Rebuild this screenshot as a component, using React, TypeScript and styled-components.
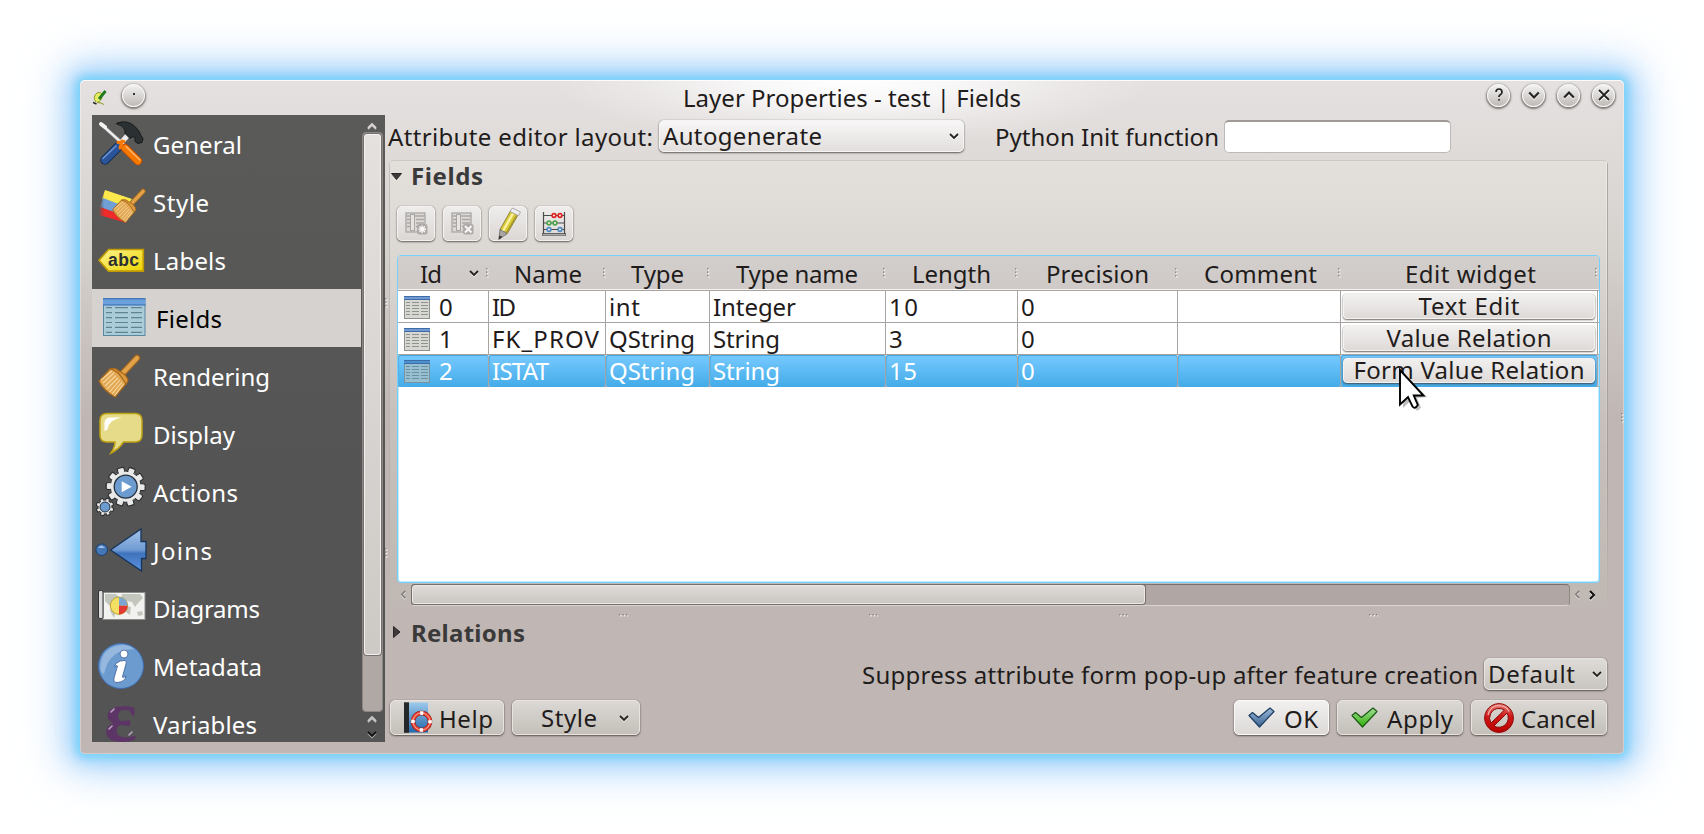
import React, { useLayoutEffect, useRef } from "react";
import styled, { createGlobalStyle, css } from "styled-components";

const GlobalStyle = createGlobalStyle`
  * { box-sizing: border-box; }
  body {
    margin: 0;
    background: #fff;
    overflow: hidden;
    color: #1f1c1b;
    font: 24px "Noto Sans", "Open Sans", sans-serif;
  }
  svg { display: block; flex: none; }
`;

/* ---------- text fitted to a given width ---------- */

const FitSpan = styled.span<{ $w: number; $dy?: number }>`
  display: block;
  flex: none;
  width: ${(p) => p.$w}px;
  line-height: 32px;
  white-space: nowrap;
  position: relative;
  top: ${(p) => p.$dy ?? 0}px;
`;

function Fit({ w, dy, children }: { w: number; dy?: number; children: string }) {
  const ref = useRef<HTMLSpanElement>(null);
  useLayoutEffect(() => {
    const el = ref.current;
    if (!el || children.length < 2) return;
    el.style.letterSpacing = "0px";
    const range = document.createRange();
    range.selectNodeContents(el);
    const natural = range.getBoundingClientRect().width;
    el.style.letterSpacing = `${(w - natural) / (children.length - 1)}px`;
  }, [w, children]);
  return (
    <FitSpan ref={ref} $w={w} $dy={dy}>
      {children}
    </FitSpan>
  );
}

/* ---------- window ---------- */

const Desktop = styled.div`
  width: 1704px;
  height: 834px;
  padding: 80px;
  background: #fff;
`;

const Window = styled.div`
  position: relative;
  width: 1544px;
  height: 674px;
  border-radius: 5px;
  background:
    radial-gradient(ellipse 300px 66px at 772px 0, #fff 0%, rgba(255, 255, 255, 0.75) 35%, rgba(255, 255, 255, 0.25) 70%, transparent 100%),
    linear-gradient(#e5e1e0 0, #dedad8 80px, #d5d1cd 170px, #c8c1be 270px, #c0b7b4 335px, #c0b7b4 100%);
  box-shadow:
    inset 0 1px 0 0 rgba(255, 255, 255, 0.8),
    inset 0 0 0 1px rgba(255, 255, 255, 0.3),
    0 0 9px 4px #78d2fa,
    0 0 24px 10px rgba(130, 195, 248, 0.6),
    0 0 44px 16px rgba(160, 206, 250, 0.65);
`;

const TitleBar = styled.header`
  display: flex;
  align-items: center;
  height: 35px;
  padding: 0 9px 0 13px;
`;

const TitleText = styled.div`
  flex: 1;
  display: flex;
  justify-content: center;
  padding-left: 84px;
`;

const Round = styled.div`
  display: flex;
  align-items: center;
  justify-content: center;
  width: 23px;
  height: 23px;
  margin: -5px 0 0 12px;
  border-radius: 50%;
  border: 1px solid #fbfbfa;
  background: linear-gradient(#f3f2f1, #bfbab6);
  box-shadow: 0 1px 2px 1px rgba(70, 65, 62, 0.65);
`;

const TitleButtons = styled.div`
  display: flex;
`;

const Body = styled.div`
  display: flex;
  height: 627px;
  padding-left: 12px;
`;

/* ---------- sidebar ---------- */

const Sidebar = styled.nav`
  display: flex;
  width: 293px;
  overflow: hidden;
  background: linear-gradient(#5a5a59, #545454 60%);
`;

const SideList = styled.div`
  width: 269px;
`;

const SideItem = styled.div<{ $on?: boolean }>`
  display: flex;
  align-items: center;
  gap: ${(p) => (p.$on ? 7 : 4)}px;
  height: 58px;
  padding-left: 3px;
  color: #fff;
  ${(p) => p.$on && css`background: #d6d2cf; color: #000;`}
`;

const VScroll = styled.div`
  display: flex;
  flex-direction: column;
  align-items: center;
  width: 22px;
  padding-top: 6px;
`;

const VSlot = styled.div`
  width: 21px;
  height: 580px;
  flex: none;
  margin: 1px 0 2px;
  padding: 1px;
  border: 1px solid #8d8784;
  border-radius: 4px;
  background: #b0a8a5;
`;

const VThumb = styled.div`
  width: 17px;
  height: 521px;
  border: 1px solid #f3f1f0;
  border-radius: 3px;
  background: linear-gradient(#e4e1df, #cdc9c5);
  box-shadow: 0 0 0 1px #767170;
`;

const VArrows = styled.div`
  display: flex;
  flex-direction: column;
  gap: 5px;
`;

/* ---------- main area ---------- */

const Gutter = styled.div`
  display: flex;
  flex-direction: column;
  justify-content: flex-start;
  gap: 240px;
  width: 3px;
  padding-top: 183px;
  flex: none;
`;

const Main = styled.main`
  display: flex;
  flex-direction: column;
  width: 1236px;
  & > * { flex: none; }
`;

const TopRow = styled.div`
  display: flex;
  align-items: center;
  height: 32px;
  margin-top: 5px;
`;

const raised = css`
  border: 1px solid #f4f2f1;
  border-radius: 5px;
  box-shadow: 0 1px 2px 0 rgba(60, 52, 50, 0.75), 0 0 1px rgba(60, 52, 50, 0.5);
`;

const Combo = styled.div<{ $w: number; $ml: number; $low?: boolean }>`
  ${raised}
  display: flex;
  align-items: center;
  justify-content: space-between;
  width: ${(p) => p.$w}px;
  height: 32px;
  margin-left: ${(p) => p.$ml}px;
  padding: 0 4px 1px 3px;
  background: ${(p) => (p.$low ? "linear-gradient(#dedbd8, #c9c5c0)" : "linear-gradient(#f8f7f7, #e2dfdd)")};
  border-color: ${(p) => (p.$low ? "#e6e3e1" : "#f6f5f4")};
`;

const Input = styled.div`
  width: 227px;
  height: 33px;
  margin-left: 5px;
  background: #fff;
  border: 1px solid #bdb9b6;
  border-top: 2px solid #9f9a98;
  border-radius: 5px;
`;

const Spacer = styled.div<{ $w: number }>`
  flex: none;
  width: ${(p) => p.$w}px;
`;

const GroupBox = styled.section`
  display: flex;
  flex-direction: column;
  height: 452px;
  width: 1219px;
  margin: 8px 0 0 1px;
  padding-left: 7px;
  border: 1px solid transparent;
  border-top-color: #ccc8c5;
  border-radius: 5px;
  background:
    linear-gradient(#c5c1bf, #b5afac 70%, transparent) left / 1px 100% no-repeat,
    linear-gradient(#aca7a5, #a39d9a 70%, transparent) right / 1px 100% no-repeat,
    linear-gradient(rgba(255, 255, 255, 0.4), transparent) 1217px 0 / 1px 100% no-repeat,
    linear-gradient(rgba(232, 228, 222, 0.5), rgba(214, 212, 204, 0.22) 70%, rgba(190, 190, 178, 0.25) 97%, transparent);
  background-origin: border-box;
`;

const GroupTitle = styled.div`
  display: flex;
  align-items: center;
  height: 30px;
  margin-left: -6px;
  gap: 9px;
  font-weight: 700;
  color: #3b3a3a;
`;

const Tools = styled.div`
  display: flex;
  gap: 8px;
  margin-top: 15px;
`;

const ToolButton = styled.div`
  ${raised}
  display: flex;
  align-items: center;
  justify-content: center;
  width: 38px;
  height: 35px;
  background: linear-gradient(#eeedec, #dbd7d4);
`;

const Table = styled.div`
  width: 1203px;
  height: 328px;
  margin: 14px 0 0 0;
  border: 1px solid #74d0fc;
  border-radius: 4px;
  background: #fff;
  box-shadow: inset 0 0 0 1px rgba(116, 208, 252, 0.45);
  overflow: hidden;
`;

const cols = "91px 117px 104px 176px 132px 160px 163px 257px 1fr";

const HeadRow = styled.div`
  display: grid;
  grid-template-columns: ${cols};
  height: 34px;
  background: linear-gradient(#d2cecb, #cfcac8);
  border-bottom: 1px solid #f4f3f2;
`;

const HeadCell = styled.div<{ $pl: number }>`
  display: flex;
  align-items: center;
  padding-left: ${(p) => p.$pl}px;
`;

const HeadEnd = styled.div`
  display: flex;
  align-items: center;
  gap: 7px;
  margin-left: auto;
`;

const Row = styled.div<{ $on?: boolean }>`
  display: grid;
  grid-template-columns: ${cols};
  height: 32px;
  border-top: 1px solid #a7a3a1;
  background: #fff;
  ${(p) => p.$on && css`color: #fff; height: 33px; border-bottom: 1px solid #a7a3a1; background: #b9dcf2;`}
`;

const Cell = styled.div<{ $on?: boolean }>`
  display: flex;
  align-items: center;
  padding-left: 3px;
  border-right: 1px solid #a7a3a1;
  ${(p) => p.$on && css`
    background: linear-gradient(#77caff, #43abe8);
    border-radius: 3px;
    box-shadow: inset 0 1px 0 #43a7e4, inset 1px 0 0 #55b3ec;
  `}
`;

const WidgetCell = styled(Cell)`
  padding: 0 2px 2px 2px;
`;

const WidgetButton = styled.div`
  ${raised}
  display: flex;
  align-items: center;
  justify-content: center;
  width: 252px;
  height: 25px;
  border-radius: 4px;
  background: linear-gradient(#f1f0ef, #dedad8);
  color: #1f1c1b;
`;

const HScroll = styled.div`
  display: flex;
  align-items: center;
  height: 23px;
  width: 1203px;
  padding-left: 2px;
`;

const HSlot = styled.div`
  width: 1159px;
  height: 22px;
  flex: none;
  margin: 0 3px 0 3px;
  border: 1px solid #8d8683;
  border-top-color: #77706d;
  border-bottom-color: #d8d4d1;
  border-radius: 4px;
  background: #b0a7a4;
`;

const HThumb = styled.div`
  width: 733px;
  height: 19px;
  border: 1px solid #ece9e7;
  border-radius: 3px;
  background: linear-gradient(#dedbd8, #cac6c2);
  box-shadow: 0 0 0 1px #756e6b;
`;

const DotsRow = styled.div`
  display: flex;
  gap: 241px;
  height: 10px;
  padding: 2px 0 0 231px;
`;

const RelationsTitle = styled(GroupTitle)`
  height: 30px;
  margin: -5px 0 0 5px;
  gap: 10px;
`;

const SuppressRow = styled.div`
  display: flex;
  align-items: center;
  height: 32px;
  margin-top: 11px;
  padding-left: 474px;
`;

const ButtonRow = styled.div`
  display: flex;
  gap: 8px;
  margin-top: 10px;
  padding-left: 2px;
`;

const Push = styled.div<{ $w: number; $pl: number; $gap: number; $ok?: boolean }>`
  ${raised}
  display: flex;
  align-items: center;
  width: ${(p) => p.$w}px;
  height: 35px;
  padding-left: ${(p) => p.$pl}px;
  gap: ${(p) => p.$gap}px;
  border-color: ${(p) => (p.$ok ? "#fafafa" : "#e6e3e1")};
  background: ${(p) => (p.$ok ? "linear-gradient(#f2f1f0, #dcd9d7)" : "linear-gradient(#dbd8d5, #c4c0b9)")};
`;

const ButtonGap = styled.div`
  width: 578px;
`;

const Pointer = styled.div`
  position: absolute;
  left: 1316px;
  top: 285px;
`;

const EdgeGrip = styled.div`
  position: absolute;
  left: 1541px;
  top: 333px;
`;

/* ---------- small drawings ---------- */

function Chevron({ dir = "down", size = 10, color = "#26221f", sw = 1.8 }: { dir?: string; size?: number; color?: string; sw?: number }) {
  const pts: Record<string, string> = {
    down: "1,3 5,7 9,3",
    up: "1,7 5,3 9,7",
    left: "7,1 3,5 7,9",
    right: "3,1 7,5 3,9",
  };
  return (
    <svg width={size} height={size} viewBox="0 0 10 10" overflow="visible">
      <polyline points={pts[dir]} transform="translate(0 1.2)" fill="none" stroke="#fff" strokeOpacity=".6" strokeWidth={sw} />
      <polyline points={pts[dir]} fill="none" stroke={color} strokeWidth={sw} />
    </svg>
  );
}

function Dots({ vertical }: { vertical?: boolean }) {
  return (
    <svg width={vertical ? 3 : 9} height={vertical ? 10 : 3} viewBox={vertical ? "0 0 3 10" : "0 0 9 3"}>
      {[0, 3.5, 7].map((d) => (
        <g key={d} transform={vertical ? `translate(0 ${d})` : `translate(${d} 0)`}>
          <rect x="1" y="1" width="1.5" height="1.5" fill="#f4f2f1" />
          <rect width="1.4" height="1.4" fill="#8d8784" />
        </g>
      ))}
    </svg>
  );
}

function TableIcon({ blue }: { blue?: boolean }) {
  return (
    <svg width="26" height="23" viewBox="0 0 26 23">
      <rect x=".5" y=".5" width="25" height="22" fill={blue ? "#97bfd2" : "#d6d8d1"} stroke={blue ? "#7b93a0" : "#8d918b"} />
      <rect width="26" height="4" fill={blue ? "#4a92cf" : "#6f9bd0"} />
      <path d="M0 .5H26M0 3.5H26" stroke="#3f6ba8" />
      <path d="M2 6.5h4M8 6.5h7M17 6.5h7M2 9.5h4M8 9.5h7M17 9.5h7M2 12.5h4M8 12.5h7M17 12.5h7M2 15.5h4M8 15.5h7M17 15.5h7M2 18.5h4M8 18.5h7M17 18.5h7" stroke={blue ? "#6e8f9f" : "#8f948e"} />
    </svg>
  );
}

function BrushShape() {
  return (
    <g>
      <path d="M42 11 27 27" stroke="#a8681a" strokeWidth="6.4" strokeLinecap="round" />
      <path d="M42 11 26 28" stroke="#e0a24a" strokeWidth="4.2" strokeLinecap="round" />
      <path d="M15 22 4 34q4 9 16 16l11-13q2-4-3-8l-4-3q-5-5-9-4z" fill="#e2a753" stroke="#a8681a" strokeWidth="1.2" />
      <path d="M6 33l11-9M8 36l11-10M10 39l11-10.500M12 42l11-11M14.500 45l10.500-12M17 47l10-12M19.500 49l9-12" stroke="#f6d8a0" strokeWidth="1.100" />
      <path d="M15 22q5 1 8 4t8 11l2-3q0-3-4-7l-5-3q-4-4-9-2z" fill="#dd9a3e" stroke="#a8681a" strokeWidth="1.2" />
    </g>
  );
}

function Gear({ r, n }: { r: number; n: number }) {
  return (
    <g>
      {Array.from({ length: n }, (_, i) => (
        <rect key={i} x={-r * 0.17} y={-r} width={r * 0.34} height={r * 0.4} rx={r * 0.06} fill="#e9e9e9" stroke="#2c2f31" strokeWidth="1.2" transform={`rotate(${(i * 360) / n + 20})`} />
      ))}
      <circle r={r * 0.8} fill="#e9e9e9" stroke="#2c2f31" strokeWidth="1" />
      {Array.from({ length: n }, (_, i) => (
        <rect key={i} x={-r * 0.14} y={-r * 0.92} width={r * 0.28} height={r * 0.4} fill="#e9e9e9" transform={`rotate(${(i * 360) / n + 20})`} />
      ))}
    </g>
  );
}

const sideIcons: Record<string, React.ReactNode> = {
  General: (
    <g strokeLinecap="round">
      <path d="M7 10 28 29" stroke="#777" strokeWidth="4" />
      <path d="M7 10 28 29" stroke="#eee" strokeWidth="2.400" />
      <path d="M6 9l4 3" stroke="#f4f4f4" strokeWidth="4" />
      <path d="M23 32 10 45" stroke="#122a4f" strokeWidth="9.500" />
      <path d="M23 32 10 45" stroke="#2a549a" strokeWidth="7.500" />
      <path d="M21 31 8 43.500" stroke="#6d92cc" strokeWidth="1.600" />
      <path d="M33 20 25 29" stroke="#eee" strokeWidth="5" strokeLinecap="butt" />
      <path d="M22 8Q33 4.500 40 11.500q5 5 6 9l2 3-1 4-4 1-3-2 0-4q-2-2-5 1l-5-5q1-7-8-9.500z" fill="#2b3032" stroke="#171b1c" />
      <path d="M30 33 43 46" stroke="#b84a00" strokeWidth="8.500" />
      <path d="M30 33 43 46" stroke="#f57900" strokeWidth="6.800" />
      <path d="M31 31.500 45 45" stroke="#ffb469" strokeWidth="1.500" />
      <path d="M23 27.500l6-1M25 33l2-7" stroke="#f57900" strokeWidth="3" />
    </g>
  ),
  Style: (
    <g>
      <defs>
        <linearGradient id="fl" x1="0" x2="1">
          <stop offset="0" stopColor="#595959" />
          <stop offset=".28" stopColor="#595959" stopOpacity="0" />
        </linearGradient>
      </defs>
      <path d="M10 17 37 26 30 37 7 26z" fill="#fde94b" />
      <path d="M8 25 29 33 24 42 5 34z" fill="#6f9fd4" />
      <path d="M5 34 22 40 32 50 4 42z" fill="#ee2a2a" />
      <path d="M3 14H26V51H3z" fill="url(#fl)" />
      <g transform="translate(14.500 9.500) scale(.8)">
        <BrushShape />
      </g>
    </g>
  ),
  Labels: (
    <g>
      <defs>
        <linearGradient id="tg" x1="0" x2="1" y2="1">
          <stop offset="0" stopColor="#fff390" />
          <stop offset="1" stopColor="#ecd500" />
        </linearGradient>
      </defs>
      <path d="M4 29.300 13.500 18.500H48.300V40.200H13.500z" fill="url(#tg)" stroke="#c09a00" strokeWidth="1.700" />
      <text x="13" y="34.500" fontFamily="Liberation Sans" fontWeight="700" fontSize="17.500" fill="#2b3032" textLength="31">abc</text>
    </g>
  ),
  Fields: (
    <g>
      <rect x="8.500" y="10" width="41.500" height="36.500" fill="#a9ccd8" stroke="#5a87a0" />
      <rect x="8" y="9.500" width="42.500" height="6.500" fill="#6ba0dc" />
      <path d="M8 9.800H50.500M8 16H50.500" stroke="#2f68b0" />
      <path d={[18.7, 23.7, 28.7, 33.5, 38.4, 43.3].map((y) => `M11 ${y}h6M20 ${y}h13M36 ${y}h11`).join("")} stroke="#5f8491" strokeWidth="1.200" />
    </g>
  ),
  Rendering: <BrushShape />,
  Display: (
    <g>
      <path d="M12 8.500H40q7 0 7 7V30q0 7-7 7H28.500Q24 44 16 48q4-6 4-11H12q-7 0-7-7V15.500q0-7 7-7z" fill="#e5db89" stroke="#c0a215" strokeWidth="1.500" />
      <path d="M9.500 26V18q0-5.500 6-5.500H27Q14 14.500 12 25z" fill="#fff" />
    </g>
  ),
  Actions: (
    <g>
      <g transform="translate(30.700 23.700)">
        <Gear r={19.5} n={10} />
        <circle r="11.500" fill="#6c9bd0" stroke="#27313d" strokeWidth="1.300" />
        <path d="M-4-5.500 6 0-4 5.500z" fill="#fff" />
      </g>
      <g transform="translate(10 44)">
        <Gear r={8.8} n={8} />
        <circle r="5" fill="#6c9bd0" stroke="#27313d" />
      </g>
    </g>
  ),
  Joins: (
    <g>
      <defs>
        <linearGradient id="jn" x2="0" y2="1">
          <stop offset="0" stopColor="#a5c6ea" />
          <stop offset=".5" stopColor="#6f9ad2" />
          <stop offset=".58" stopColor="#3f74bd" />
          <stop offset="1" stopColor="#5b92dd" />
        </linearGradient>
      </defs>
      <circle cx="6.700" cy="28.700" r="5.800" fill="#4377b6" stroke="#1e3e6e" />
      <path d="M3 27q3-5 7 0z" fill="#9fc0e4" />
      <path d="M15.500 29 46 8V20.500H51V37.500H46.500V50z" fill="url(#jn)" stroke="#17345c" strokeWidth="1.300" />
    </g>
  ),
  Diagrams: (
    <g>
      <rect x="8" y="13.500" width="42" height="27" fill="#f2f2f0" stroke="#8c8c8a" />
      <path d="M10 15h11l3 3-6 4-3 5-5-5zM17 28l4 3-2 8-4-7zM27 15l18 0 3 4-5 5-3 4-3-5-5-1-6 0zM30 27l6 1-1 8-4-3zM42 33l5-1 1 4-5 1z" fill="#c3c6bd" />
      <rect x="3.500" y="11.500" width="4.500" height="28" rx="1.500" fill="#ddd" stroke="#333" strokeWidth="1" />
      <circle cx="24" cy="26.700" r="8.700" fill="#f3df62" stroke="#bfa230" />
      <path d="M24 26.700V18a8.700 8.700 0 0 1 8.700 8.700z" fill="#7da5d2" />
      <path d="M24 26.700h8.700a8.700 8.700 0 0 1-8.700 8.700z" fill="#e23a35" />
    </g>
  ),
  Metadata: (
    <g>
      <circle cx="26" cy="29" r="22.500" fill="#6c9ccf" stroke="#3d6eb4" strokeWidth="1" />
      <path d="M5.500 32Q5 10 27 8q8 0 12 4Q14 12 9 37 6 36 5.500 32z" fill="#a4c2e3" opacity=".75" />
      <circle cx="29" cy="17" r="4" fill="#fff" stroke="#3d5d98" strokeWidth=".8" />
      <path d="M21 26.500Q25 23 30 23.500 32 24 31 27L27.500 39.500q-.5 2 3.500-.5Q30 45 22 45.500q-4 0-3-4.500L22.500 29q0-1-3 .3z" fill="#fff" stroke="#3d5d98" strokeWidth=".8" />
    </g>
  ),
  Variables: (
    <g>
      <text x="9" y="45.500" fontFamily="Liberation Serif" fontWeight="700" fontSize="74" fill="#5c3566" textLength="33" lengthAdjust="spacingAndGlyphs">ε</text>
      <path d="M16 17l3-3M14 34l3-3M34 40l3-3" stroke="#b9a3c0" strokeWidth="1.600" strokeLinecap="round" />
    </g>
  ),
};

function FieldToolIcon({ mark }: { mark: string }) {
  return (
    <svg width="23" height="23" viewBox="0 0 23 23">
      <rect x="1" y="1" width="19" height="19" fill="#dcd9d7" stroke="#aaa6a4" strokeWidth="1.300" />
      <path d="M1 4h19M2 7.500h3M2 11h3M2 14.500h3M11 7.500h8M11 11h8M11 14.500h3" stroke="#aaa6a4" strokeWidth="1.400" />
      <rect x="5.500" y="2.500" width="4" height="16" fill="#e6e4e2" stroke="#aaa6a4" />
      <rect x="12" y="12" width="10.500" height="10.500" rx="2" fill="#aeaaa8" />
      <path d={mark === "x" ? "M14 14l6.500 6.500M20.500 14l-6.500 6.500" : "M17.200 13.500v7.500M13.500 17.200h7.500M14.500 14.500l5.400 5.400M19.900 14.500l-5.400 5.400"} stroke="#f8f7f6" strokeWidth={mark === "x" ? 1.9 : 1.4} />
    </svg>
  );
}

function PencilIcon() {
  return (
    <svg width="32" height="33" viewBox="0 0 32 33">
      <path d="M18.500 4 26 8 15 27 8 22.500z" fill="#d9c839" stroke="#7d7322" strokeWidth=".8" />
      <path d="M21 6.500 11 24" stroke="#fbf3a0" strokeWidth="2.400" />
      <path d="M24.500 8.500 14.500 26" stroke="#a8962a" strokeWidth="1.400" />
      <path d="M18 4.500 20.500 1 28.500 5 26.500 8.800z" fill="#eee" stroke="#999" strokeWidth=".8" />
      <path d="M8 22.500q2 .5 3 2 2.500 0 4 2.300L7 32z" fill="#aaa7a4" stroke="#666" strokeWidth=".8" />
      <path d="M7.300 28.500 6.500 33l4-3z" fill="#333" />
    </svg>
  );
}

function AbacusIcon() {
  return (
    <svg width="24" height="24" viewBox="0 0 24 24">
      <path d="M1.500 0V22M22.500 0V22M1 3.500H23M1 11H23M1 17.500H23" stroke="#4c4a49" strokeWidth="1.200" />
      <path d="M0 21.500H24V24H0z" fill="#aaa" stroke="#4c4a49" strokeWidth=".8" />
      {[[12, 3.5, "#d22"], [18, 3.5, "#d22"], [7, 11, "#4ca54c"], [13, 11, "#4ca54c"], [7, 17.5, "#4c8bc4"], [18, 17.5, "#4c8bc4"]].map(([x, y, c], i) => (
        <circle key={i} cx={x} cy={y} r="1.900" fill="#f2e8e6" stroke={c as string} strokeWidth="1.600" />
      ))}
    </svg>
  );
}

function HelpIcon() {
  return (
    <svg width="29" height="31" viewBox="0 0 29 31">
      <defs>
        <linearGradient id="hp" x2="0" y2="1">
          <stop offset="0" stopColor="#9dcaec" />
          <stop offset="1" stopColor="#2166ab" />
        </linearGradient>
      </defs>
      <rect x="5" y=".5" width="19" height="30" fill="url(#hp)" />
      <rect width="5" height="30.500" y=".3" fill="#25282a" />
      <g fill="none">
        <circle cx="17.500" cy="19.500" r="8.500" stroke="#8d1a12" strokeWidth="4.400" />
        <circle cx="17.500" cy="19.500" r="8.500" stroke="#e8402f" strokeWidth="3.400" />
        <circle cx="17.500" cy="19.500" r="8.500" stroke="#fff" strokeWidth="3.600" strokeDasharray="3.200 10.152" strokeDashoffset="1.600" />
        <circle cx="17.500" cy="19.500" r="8.500" stroke="#fff" strokeOpacity=".55" strokeWidth="1" />
      </g>
    </svg>
  );
}

function CheckIcon({ c1, c2, edge }: { c1: string; c2: string; edge: string }) {
  const id = `ck${c2.slice(1)}`;
  return (
    <svg width="27" height="21" viewBox="0 0 27 21">
      <defs>
        <linearGradient id={id} x2="0" y2="1">
          <stop offset="0" stopColor={c1} />
          <stop offset="1" stopColor={c2} />
        </linearGradient>
      </defs>
      <path d="M1 8.500 4.500 5.500 10.500 10.500 22 1 26 4.500 11.500 20z" fill={`url(#${id})`} stroke={edge} strokeWidth="1.200" strokeLinejoin="round" />
    </svg>
  );
}

function CancelIcon() {
  return (
    <svg width="30" height="30" viewBox="0 0 30 30">
      <defs>
        <linearGradient id="cn" x2="0" y2="1">
          <stop offset="0" stopColor="#e88078" />
          <stop offset=".45" stopColor="#cf1717" />
          <stop offset="1" stopColor="#b80000" />
        </linearGradient>
      </defs>
      <path fillRule="evenodd" d="M15 .6a14.400 14.400 0 1 0 .01 0zM15 5.500a9.500 9.500 0 0 1 5.300 1.600L7 20A9.500 9.500 0 0 1 15 5.500zM23 10a9.500 9.500 0 0 1-13 13z" fill="url(#cn)" stroke="#8e0b0b" strokeWidth="1" />
      <path d="M4 12Q6 3 15 2.500q7 0 10 6" fill="none" stroke="#f4b5b0" strokeWidth="1.200" />
    </svg>
  );
}

function Triangle({ right }: { right?: boolean }) {
  return right ? (
    <svg width="8" height="12" viewBox="0 0 8 12"><path d="M.5 .5 7 6 .5 11.500z" fill="#3d3b3a" stroke="#2a2827" /></svg>
  ) : (
    <svg width="11" height="7" viewBox="0 0 11 7"><path d="M.5 .5H10.500L5.500 6.500z" fill="#3d3b3a" stroke="#2a2827" /></svg>
  );
}

/* ---------- data ---------- */

const sideItems: [string, number][] = [
  ["General", 89], ["Style", 56], ["Labels", 73], ["Fields", 66], ["Rendering", 117], ["Display", 82],
  ["Actions", 85], ["Joins", 59], ["Diagrams", 107], ["Metadata", 109], ["Variables", 104],
];

const heads: [string, number, number][] = [
  ["Id", 22, 22], ["Name", 68, 25], ["Type", 53, 25], ["Type name", 122, 26], ["Length", 79, 26],
  ["Precision", 103, 28], ["Comment", 113, 26], ["Edit widget", 131, 64],
];

const rows: [string, number][][] = [
  [["0", 14], ["ID", 24], ["int", 31], ["Integer", 83], ["10", 29], ["0", 14], ["", 0], ["Text Edit", 101]],
  [["1", 14], ["FK_PROV", 107], ["QString", 86], ["String", 67], ["3", 14], ["0", 14], ["", 0], ["Value Relation", 165]],
  [["2", 14], ["ISTAT", 57], ["QString", 86], ["String", 67], ["15", 28], ["0", 14], ["", 0], ["Form Value Relation", 231]],
];

export default function App() {
  return (
    <Desktop>
      <GlobalStyle />
      <Window>
        <TitleBar>
          <svg width="14" height="16" viewBox="0 0 14 16">
            <path d="M3 12Q-1 7 4 3q5-2 5 3 0 5-5 6.500 4 0 7 2" fill="#e6ec62" stroke="#8d9a2c" strokeWidth="1" />
            <path d="M12.500 1 6 9" stroke="#1f7a1c" strokeWidth="2.800" />
            <path d="M0 12.500l3.500 1.500" stroke="#222" strokeWidth="1.600" />
          </svg>
          <Spacer $w={3} />
          <Round><svg width="4" height="4"><rect x="1" width="2" height="2" fill="#333" /></svg></Round>
          <TitleText><Fit w={338}>Layer Properties - test | Fields</Fit></TitleText>
          <TitleButtons>
            <Round>
              <svg width="12" height="16" viewBox="0 0 12 16"><path d="M3 5Q3 2 6 2t3 3q0 2-2 3-1 .6-1 2" fill="none" stroke="#222" strokeWidth="1.700" /><rect x="5.200" y="12" width="1.600" height="1.600" fill="#222" /></svg>
            </Round>
            <Round><Chevron size={12} /></Round>
            <Round><Chevron size={12} dir="up" /></Round>
            <Round><svg width="12" height="12" viewBox="0 0 12 12"><path d="M1 1 11 11M11 1 1 11" stroke="#fff" strokeWidth="2" transform="translate(0 1.200)" /><path d="M1 1 11 11M11 1 1 11" stroke="#222" strokeWidth="1.800" /></svg></Round>
          </TitleButtons>
        </TitleBar>

        <Body>
          <Sidebar>
            <SideList>
              {sideItems.map(([name, w]) => (
                <SideItem key={name} $on={name === "Fields"}>
                  <svg width="54" height="58" viewBox="0 0 54 58">{sideIcons[name]}</svg>
                  <Fit w={w} dy={1}>{name}</Fit>
                </SideItem>
              ))}
            </SideList>
            <VScroll>
              <Chevron dir="up" color="#d8d5d3" />
              <VSlot><VThumb /></VSlot>
              <VArrows>
                <Chevron dir="up" color="#c8c5c3" />
                <Chevron color="#111" />
              </VArrows>
            </VScroll>
          </Sidebar>
          <Gutter>
            <Dots vertical />
            <Dots vertical />
          </Gutter>
          <Main>
            <TopRow>
              <Fit w={265} dy={1}>Attribute editor layout:</Fit>
              <Combo $w={305} $ml={6}>
                <Fit w={159}>Autogenerate</Fit>
                <Chevron />
              </Combo>
              <Spacer $w={31} />
              <Fit w={224} dy={1}>Python Init function</Fit>
              <Input />
            </TopRow>
            <GroupBox>
              <GroupTitle><Triangle /><Fit w={72}>Fields</Fit></GroupTitle>
              <Tools>
                <ToolButton><FieldToolIcon mark="new" /></ToolButton>
                <ToolButton><FieldToolIcon mark="x" /></ToolButton>
                <ToolButton><PencilIcon /></ToolButton>
                <ToolButton><AbacusIcon /></ToolButton>
              </Tools>
              <Table>
                <HeadRow>
                  {heads.map(([name, w, pl], i) => (
                    <HeadCell key={name} $pl={pl}>
                      <Fit w={w} dy={1}>{name}</Fit>
                      <HeadEnd>
                        {i === 0 && <Chevron />}
                        <Dots vertical />
                      </HeadEnd>
                    </HeadCell>
                  ))}
                </HeadRow>
                {rows.map((row, r) => (
                  <Row key={r} $on={r === 2}>
                    {row.map(([text, w], c) =>
                      c === 7 ? (
                        <WidgetCell key={c} $on={r === 2}>
                          <WidgetButton><Fit w={w}>{text}</Fit></WidgetButton>
                        </WidgetCell>
                      ) : (
                        <Cell key={c} $on={r === 2}>
                          {c === 0 && <><Spacer $w={3} /><TableIcon blue={r === 2} /><Spacer $w={9} /></>}
                          <Fit w={w}>{text}</Fit>
                        </Cell>
                      )
                    )}
                  </Row>
                ))}
              </Table>
              <HScroll>
                <Chevron dir="left" size={9} color="#85807d" />
                <HSlot><HThumb /></HSlot>
                <Chevron dir="left" size={9} color="#85807d" />
                <Spacer $w={5} />
                <Chevron dir="right" color="#111" sw={2} />
              </HScroll>
            </GroupBox>
            <DotsRow><Dots /><Dots /><Dots /><Dots /></DotsRow>
            <RelationsTitle><Triangle right /><Fit w={114} dy={1}>Relations</Fit></RelationsTitle>
            <SuppressRow>
              <Fit w={616} dy={1}>Suppress attribute form pop-up after feature creation</Fit>
              <Combo $w={123} $ml={6} $low>
                <Fit w={87}>Default</Fit>
                <Chevron />
              </Combo>
            </SuppressRow>
            <ButtonRow>
              <Push $w={114} $pl={13} $gap={6}><HelpIcon /><Fit w={54} dy={1}>Help</Fit></Push>
              <Push $w={128} $pl={28} $gap={22}><Fit w={56}>Style</Fit><Chevron /></Push>
              <ButtonGap />
              <Push $w={95} $pl={13} $gap={9} $ok><CheckIcon c1="#9dbbdc" c2="#3a618f" edge="#1d3d63" /><Fit w={34} dy={1}>OK</Fit></Push>
              <Push $w={126} $pl={13} $gap={9}><CheckIcon c1="#a5e09a" c2="#2fb005" edge="#1c5a16" /><Fit w={66} dy={1}>Apply</Fit></Push>
              <Push $w={136} $pl={12} $gap={7}><CancelIcon /><Fit w={75} dy={1}>Cancel</Fit></Push>
            </ButtonRow>
          </Main>
        </Body>

        <Pointer>
          <svg width="34" height="48" viewBox="0 0 34 48">
            <path d="M5 6 5 41 13 33.500 17.500 42.500Q20 45 23 40.500L19 31 29 30z" fill="#000" opacity=".25" transform="translate(2 2)" />
            <path d="M4 5V39.500L12 32 16.500 41.500Q19 44.500 21.800 40L17.800 30.500H27.500z" fill="#fff" stroke="#000" strokeWidth="1.900" />
          </svg>
        </Pointer>
        <EdgeGrip><Dots vertical /></EdgeGrip>
      </Window>
    </Desktop>
  );
}
